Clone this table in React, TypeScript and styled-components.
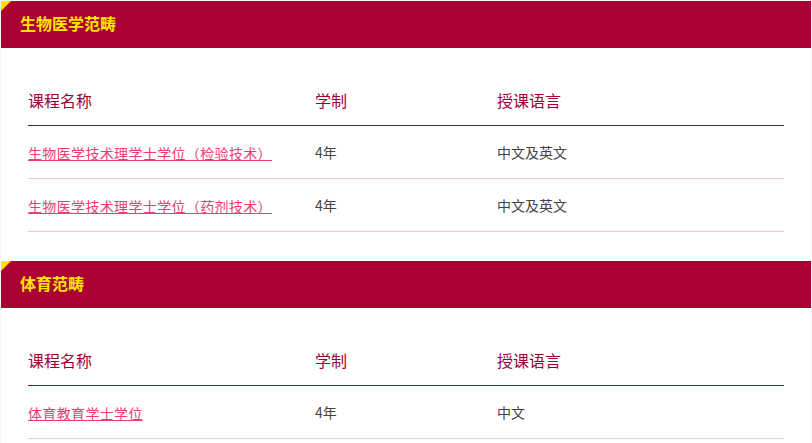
import styled, { createGlobalStyle } from "styled-components";

const GlobalStyle = createGlobalStyle`
  html, body {
    margin: 0;
    padding: 0;
    background: #f2f8fa;
  }
  body {
    font-family: "Noto Sans CJK SC", "Noto Sans", sans-serif;
  }
`;

const Page = styled.div`
  padding: 1px 1px 0 1px;
`;

const Section = styled.section`
  background: #ffffff;
`;

const SectionHeader = styled.h2`
  position: relative;
  box-sizing: border-box;
  margin: 0;
  height: 47px;
  display: flex;
  align-items: center;
  padding: 0 0 3px 19px;
  background: #ab0034;
  color: #ffe400;
  font-size: 16px;
  font-weight: 700;
  &::before {
    content: "";
    position: absolute;
    top: 0;
    left: 0;
    border-top: 10px solid #ffe400;
    border-right: 10px solid transparent;
  }
`;

const Body = styled.div`
  padding: 28px 27px 29px 27px;
`;

const Row = styled.div<{ head?: boolean }>`
  display: grid;
  box-sizing: border-box;
  grid-template-columns: 287px 182px 1fr;
  align-items: center;
  height: ${(p) => (p.head ? "50px" : "53px")};
  padding-bottom: ${(p) => (p.head ? "2px" : "0")};
  border-bottom: 1px solid ${(p) => (p.head ? "#a4003a" : "#f1c3d3")};
`;

const HeadCell = styled.div`
  font-size: 16px;
  color: #9e0036;
`;

const Cell = styled.div`
  font-size: 14px;
  color: #444444;
`;

const CourseLink = styled.a`
  font-size: 14px;
  letter-spacing: 0.35px;
  color: #ef3b74;
  text-decoration: underline;
  cursor: pointer;
`;

interface Course {
  name: string;
  years: string;
  lang: string;
}

const sections: { title: string; courses: Course[] }[] = [
  {
    title: "生物医学范畴",
    courses: [
      { name: "生物医学技术理学士学位（检验技术）", years: "4年", lang: "中文及英文" },
      { name: "生物医学技术理学士学位（药剂技术）", years: "4年", lang: "中文及英文" },
    ],
  },
  {
    title: "体育范畴",
    courses: [{ name: "体育教育学士学位", years: "4年", lang: "中文" }],
  },
];

export default function App() {
  return (
    <Page>
      <GlobalStyle />
      {sections.map((s) => (
        <Section key={s.title}>
          <SectionHeader>{s.title}</SectionHeader>
          <Body>
            <Row head>
              <HeadCell>课程名称</HeadCell>
              <HeadCell>学制</HeadCell>
              <HeadCell>授课语言</HeadCell>
            </Row>
            {s.courses.map((c) => (
              <Row key={c.name}>
                <div>
                  <CourseLink>{c.name}</CourseLink>
                </div>
                <Cell>{c.years}</Cell>
                <Cell>{c.lang}</Cell>
              </Row>
            ))}
          </Body>
        </Section>
      ))}
    </Page>
  );
}
